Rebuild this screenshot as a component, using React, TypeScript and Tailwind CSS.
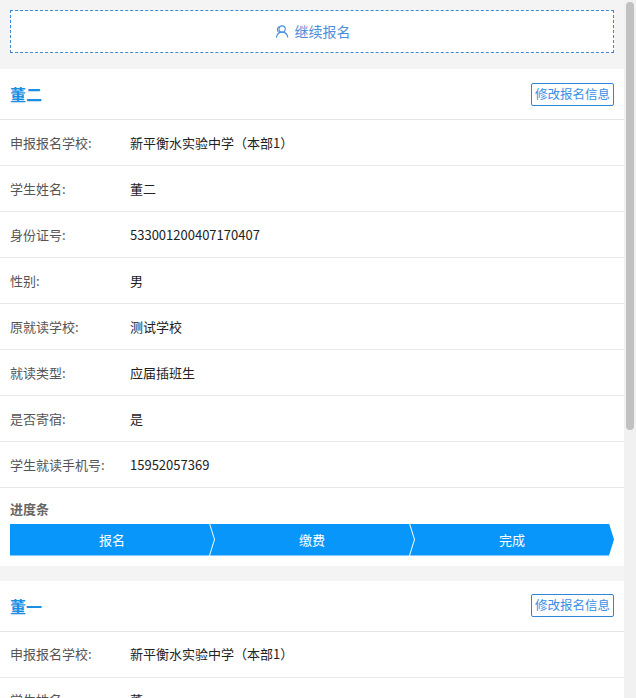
import React from "react";

const rows1 = [
  ["申报报名学校:", "新平衡水实验中学（本部1）"],
  ["学生姓名:", "董二"],
  ["身份证号:", "533001200407170407"],
  ["性别:", "男"],
  ["原就读学校:", "测试学校"],
  ["就读类型:", "应届插班生"],
  ["是否寄宿:", "是"],
  ["学生就读手机号:", "15952057369"],
];
const rows2 = [
  ["申报报名学校:", "新平衡水实验中学（本部1）"],
  ["学生姓名:", "董一"],
];

function Card({ name, rows, progress }: { name: string; rows: string[][]; progress?: boolean }) {
  return (
    <div className="bg-white">
      <div className="h-[51px] flex items-center justify-between px-[10px] border-b border-[#e5e5e5]">
        <span className="text-[16px] font-bold text-[#1a8fe3]">{name}</span>
        <span className="h-[23px] px-[3px] flex items-center border border-[#2f86d6] rounded-[2px] text-[12.5px] text-[#3a8ee6]">修改报名信息</span>
      </div>
      {rows.map(([l, v], i) => (
        <div key={i} className="h-[46px] flex items-center px-[10px] border-b border-[#e8e8e8] text-[13px]">
          <span className="w-[120px] text-[#555]">{l}</span>
          <span className="text-[#222]">{v}</span>
        </div>
      ))}
      {progress && (
        <div className="px-[10px] pt-[11px] pb-[10px]">
          <div className="text-[13px] font-bold text-[#666] mb-[5px]">进度条</div>
          <div className="flex h-[32px] text-white text-[13px]">
            <div className="flex-1 bg-[#0896fa] flex items-center justify-center [clip-path:polygon(0_0,calc(100%-5px)_0,100%_50%,calc(100%-5px)_100%,0_100%)]">报名</div>
            <div className="flex-1 -ml-[4px] bg-[#0896fa] flex items-center justify-center [clip-path:polygon(0_0,calc(100%-5px)_0,100%_50%,calc(100%-5px)_100%,0_100%,5px_50%)]">缴费</div>
            <div className="flex-1 -ml-[4px] bg-[#0896fa] flex items-center justify-center [clip-path:polygon(0_0,calc(100%-5px)_0,100%_50%,calc(100%-5px)_100%,0_100%,5px_50%)]">完成</div>
          </div>
        </div>
      )}
    </div>
  );
}

export default function App() {
  return (
    <div className="h-[698px] overflow-hidden flex bg-[#f4f4f4]" style={{ fontFamily: '"Noto Sans CJK SC", "Noto Sans", sans-serif' }}>
      <div className="flex-1 min-w-0">
        <div className="p-[10px] pb-[16px]">
          <div className="h-[43px] border border-dashed border-[#3e8ad0] flex items-center justify-center gap-[6px] text-[14px] text-[#4a8fd9] bg-white">
            <svg width="15" height="15" viewBox="0 0 24 24" fill="none" stroke="currentColor" strokeWidth="1.8" strokeLinecap="round">
              <circle cx="13" cy="8" r="5" />
              <path d="M4 21c1-5 5-8 9-8s8 3 9 8" />
              <path d="M8 4.5a5 5 0 0 0-1 8" />
            </svg>
            继续报名
          </div>
        </div>
        <Card name="董二" rows={rows1} progress />
        <div className="h-[15px]" />
        <Card name="董一" rows={rows2} />
      </div>
      <div className="w-[12px] bg-[#f1f1f1] relative">
        <div className="absolute left-[2px] right-[2px] top-[2px] h-[428px] bg-[#c1c1c1] rounded-[4px]" />
      </div>
    </div>
  );
}
